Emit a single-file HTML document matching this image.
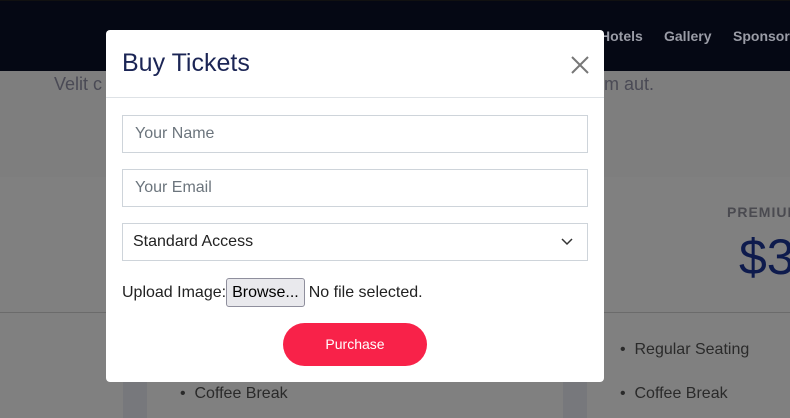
<!DOCTYPE html>
<html><head><style>
*{box-sizing:border-box;margin:0;padding:0}
body{width:790px;height:418px;overflow:hidden;position:relative;background:#808080;font-family:"Liberation Sans",sans-serif}
.nav{position:absolute;left:0;top:0;width:790px;height:71px;background:#050814;border-top:1px solid #111}
.nav span{position:absolute;top:27px;color:#9a9ca6;font-size:14px;font-weight:bold}
.sec1{position:absolute;left:0;top:71px;width:790px;height:106px;background:#7e7e7e}
.txt{position:absolute;top:74px;font-size:18px;color:#4a4a55}
.hr{position:absolute;left:0;top:312px;width:790px;height:1px;background:#6b6b6b}
.strip{position:absolute;top:312px;width:24px;height:106px;background:#77787c}
.li{position:absolute;font-size:16px;color:#2a2a2a}
.modal{position:absolute;left:106px;top:30px;width:498px;height:352px;background:#fff;border-radius:4px}
.title{position:absolute;left:16px;top:19px;font-size:25px;color:#1b2555}
.close{position:absolute;left:464px;top:25px}
.hd{position:absolute;left:0;top:67px;width:498px;height:1px;background:#dee2e6}
.in{position:absolute;left:16px;width:466px;height:38px;border:1px solid #ced4da;font-size:16px;color:#6c757d;padding:9px 12px}
.up{position:absolute;left:16px;top:248px;font-size:16px;color:#222;line-height:30px}
.br{display:inline-block;background:#e9e9ed;border:1px solid #8f8f9d;border-radius:3px;padding:0 5px;line-height:27px;margin:0 4px 0 0;color:#000;vertical-align:middle}
.btn{position:absolute;left:177px;top:293px;width:144px;height:43px;border-radius:22px;background:#f82249;color:#fff;font-size:14px;text-align:center;line-height:43px}
</style></head><body>
<div class="nav"><span style="left:600px">Hotels</span><span style="left:664px">Gallery</span><span style="left:733px">Sponsors</span></div>
<div class="sec1"></div>
<div class="txt" style="left:54px">Velit c</div>
<div class="txt" style="left:604px">m aut.</div>
<div style="position:absolute;left:727px;top:204px;font-size:14px;font-weight:bold;color:#4a4a50;letter-spacing:1px">PREMIUM</div>
<div style="position:absolute;left:739px;top:228px;font-size:50px;color:#0e1b4d">$3</div>
<div class="hr"></div>
<div class="strip" style="left:123px"></div>
<div class="strip" style="left:563px"></div>
<div class="li" style="left:620px;top:341px">• &nbsp;Regular Seating</div>
<div class="li" style="left:620px;top:385px">• &nbsp;Coffee Break</div>
<div class="li" style="left:180px;top:385px">• &nbsp;Coffee Break</div>
<div class="modal">
<div class="title">Buy Tickets</div>
<svg class="close" width="20" height="20" viewBox="0 0 20 20"><path d="M2 2L18 18M18 2L2 18" stroke="#777" stroke-width="2"/></svg>
<div class="hd"></div>
<div class="in" style="top:85px">Your Name</div>
<div class="in" style="top:139px">Your Email</div>
<div class="in" style="top:193px;color:#222;padding-left:10px">Standard Access
<svg style="position:absolute;right:14px;top:14px" width="12" height="8" viewBox="0 0 12 8"><path d="M1 1L6 6L11 1" stroke="#333" stroke-width="1.5" fill="none"/></svg></div>
<div class="up">Upload Image:<span class="br">Browse...</span>No file selected.</div>
<div class="btn">Purchase</div>
</div>
</body></html>
